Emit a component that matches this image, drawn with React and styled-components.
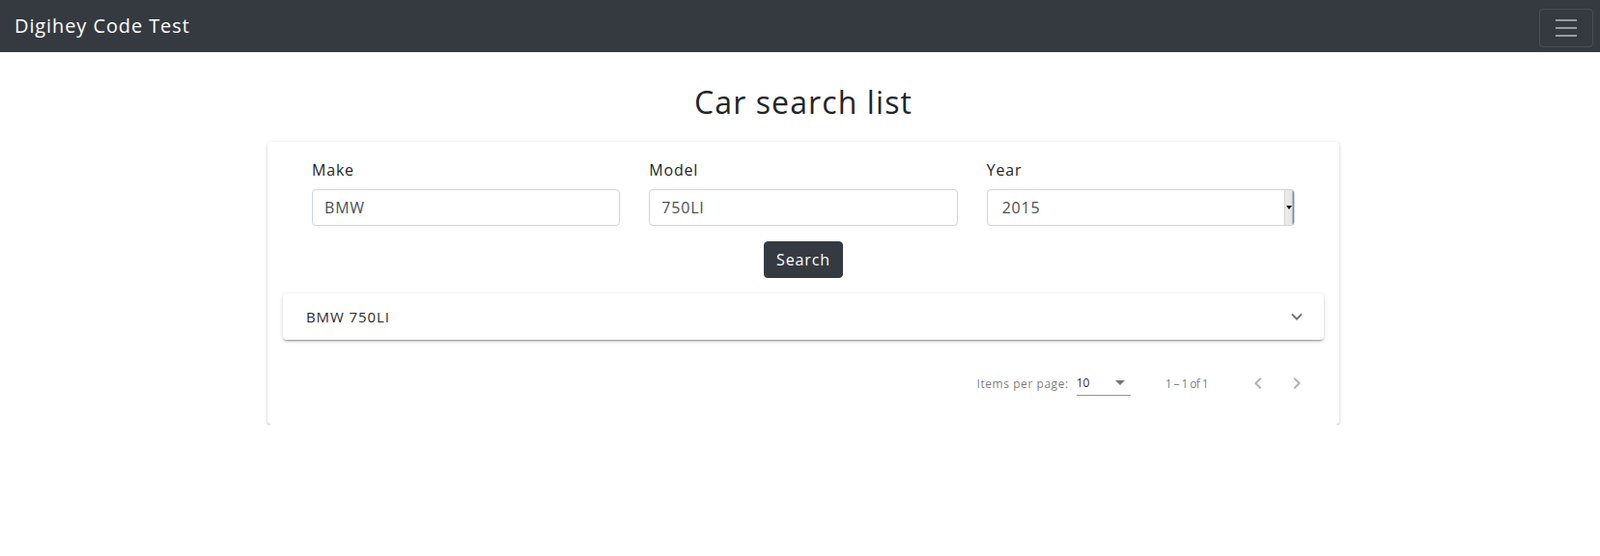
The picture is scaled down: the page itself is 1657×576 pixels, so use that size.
import styled, { createGlobalStyle } from "styled-components";

const GlobalStyle = createGlobalStyle`
  body {
    margin: 0;
    background: #fff;
    font-family: "Open Sans", "Liberation Sans", sans-serif;
    color: #212529;
  }
  * {
    box-sizing: border-box;
  }
`;

const Navbar = styled.nav`
  height: 54px;
  background: #343a40;
  display: flex;
  align-items: center;
  justify-content: space-between;
  padding: 0 7px 0 15px;
`;

const Brand = styled.div`
  color: #fff;
  font-size: 20px;
  line-height: 30px;
  letter-spacing: 0.9px;
`;

const Toggler = styled.button`
  width: 56px;
  height: 40px;
  margin-top: 4px;
  background: transparent;
  border: 1px solid rgba(255, 255, 255, 0.1);
  border-radius: 4px;
  display: flex;
  align-items: center;
  justify-content: center;
  padding: 0;
`;

const Main = styled.main`
  padding-left: 7px;
`;

const Title = styled.h2`
  margin: 33px 0 22px;
  text-align: center;
  font-size: 32px;
  line-height: 38px;
  font-weight: 400;
  letter-spacing: 1.1px;
`;

const Card = styled.section`
  width: 1110px;
  margin: 0 auto;
  background: #fff;
  border-radius: 4px;
  box-shadow: 0 2px 1px -1px rgba(0, 0, 0, 0.28), 0 1px 2px 0 rgba(0, 0, 0, 0.18),
    0 1px 4px 0 rgba(0, 0, 0, 0.1);
  padding: 16px 16px 15px;
`;

const Form = styled.form`
  display: flex;
  flex-direction: column;
  align-items: center;
  gap: 16px;
  padding: 0 30px;
`;

const FieldRow = styled.div`
  width: 100%;
  display: grid;
  grid-template-columns: repeat(3, 1fr);
  gap: 30px;
`;

const Field = styled.div`
  display: flex;
  flex-direction: column;
`;

const Label = styled.label`
  font-size: 16px;
  line-height: 24px;
  margin: 1px 0 8px;
  letter-spacing: 0.8px;
`;

const Input = styled.input`
  height: 38px;
  border: 1px solid #ced4da;
  border-radius: 4px;
  padding: 0 12px;
  font-family: inherit;
  font-size: 16px;
  letter-spacing: 0.8px;
  color: #495057;
  background: #fff;
  outline: none;
`;

const SelectBox = styled.div`
  position: relative;
  height: 38px;
`;

const Select = styled.select`
  width: 100%;
  height: 38px;
  appearance: none;
  border: 1px solid #ced4da;
  border-radius: 4px;
  padding: 0 16px 0 15px;
  font-family: inherit;
  font-size: 16px;
  letter-spacing: 0.8px;
  color: #495057;
  background: #fff;
  outline: none;
`;

const SpinStrip = styled.div`
  position: absolute;
  top: 1px;
  right: 1px;
  bottom: 1px;
  width: 10px;
  background: linear-gradient(to right, #bdbdbd 0, #ececec 1px, #e4e4e4 8px, #8a8a8a 9px);
  border-radius: 0 3px 3px 0;
  display: flex;
  align-items: center;
  justify-content: center;
  pointer-events: none;

  &::after {
    content: "";
    border-left: 3px solid transparent;
    border-right: 3px solid transparent;
    border-top: 4px solid #111;
    margin-left: -1px;
  }
`;

const SearchButton = styled.button`
  height: 38px;
  padding: 0 12px;
  background: #343a40;
  color: #fff;
  border: 1px solid #343a40;
  border-radius: 4px;
  font-family: inherit;
  font-size: 16px;
  letter-spacing: 0.9px;
`;

const Panel = styled.div`
  margin-top: 16px;
  height: 48px;
  border-radius: 4px;
  background: #fff;
  box-shadow: 0 3px 1px -2px rgba(0, 0, 0, 0.2), 0 2px 2px 0 rgba(0, 0, 0, 0.14),
    0 1px 5px 0 rgba(0, 0, 0, 0.12);
  display: flex;
  align-items: center;
  justify-content: space-between;
  padding: 0 21px 0 24px;
  font-size: 15px;
  letter-spacing: 0.9px;
  color: rgba(0, 0, 0, 0.87);
`;

const Paginator = styled.div`
  margin-top: 17px;
  height: 56px;
  display: flex;
  align-items: center;
  justify-content: flex-end;
  padding: 0 8px;
  font-size: 12px;
  color: rgba(0, 0, 0, 0.54);
`;

const PageLabel = styled.span`
  letter-spacing: 0.55px;
`;

const PageSize = styled.div`
  width: 56px;
  margin: 0 0 0 8px;
  height: 24px;
  display: flex;
  align-items: center;
  justify-content: space-between;
  border-bottom: 1px solid rgba(0, 0, 0, 0.42);
  color: rgba(0, 0, 0, 0.87);
  padding: 0 6px 2px 0;
  position: relative;
  top: 1px;

  &::after {
    content: "";
    border-left: 5px solid transparent;
    border-right: 5px solid transparent;
    border-top: 5px solid rgba(0, 0, 0, 0.54);
  }
`;

const Range = styled.div`
  margin: 0 32px 0 36px;
  letter-spacing: -0.6px;
`;

const IconButton = styled.button`
  width: 40px;
  height: 40px;
  border: none;
  background: transparent;
  padding: 0;
  display: flex;
  align-items: center;
  justify-content: center;
  color: rgba(0, 0, 0, 0.3);
`;

const Chevron = ({ dir }) => (
  <svg width="24" height="24" viewBox="0 0 24 24" fill="currentColor">
    {dir === "left" ? (
      <path d="M15.41 7.41L14 6l-6 6 6 6 1.41-1.41L10.83 12z" />
    ) : (
      <path d="M10 6L8.59 7.41 13.17 12l-4.58 4.59L10 18l6-6z" />
    )}
  </svg>
);

const App = () => {
  return (
    <>
      <GlobalStyle />
      <Navbar>
        <Brand>Digihey Code Test</Brand>
        <Toggler aria-label="Toggle navigation">
          <svg width="30" height="30" viewBox="0 0 30 30">
            <path
              d="M4 7h22M4 15h22M4 23h22"
              stroke="rgba(255,255,255,0.5)"
              strokeWidth="2"
              strokeLinecap="butt"
            />
          </svg>
        </Toggler>
      </Navbar>
      <Main>
        <Title>Car search list</Title>
        <Card>
          <Form onSubmit={(e) => e.preventDefault()}>
            <FieldRow>
              <Field>
                <Label>Make</Label>
                <Input defaultValue="BMW" />
              </Field>
              <Field>
                <Label>Model</Label>
                <Input defaultValue="750LI" />
              </Field>
              <Field>
                <Label>Year</Label>
                <SelectBox>
                  <Select defaultValue="2015">
                    <option>2015</option>
                  </Select>
                  <SpinStrip />
                </SelectBox>
              </Field>
            </FieldRow>
            <SearchButton type="submit">Search</SearchButton>
          </Form>
          <Panel>
            <span>BMW 750LI</span>
            <svg width="14" height="10" viewBox="0 0 14 10">
              <path
                d="M2 2.5l5 5 5-5"
                fill="none"
                stroke="rgba(0,0,0,0.54)"
                strokeWidth="2"
              />
            </svg>
          </Panel>
          <Paginator>
            <PageLabel>Items per page:</PageLabel>
            <PageSize>10</PageSize>
            <Range>1 – 1 of 1</Range>
            <IconButton aria-label="Previous page">
              <Chevron dir="left" />
            </IconButton>
            <IconButton aria-label="Next page">
              <Chevron dir="right" />
            </IconButton>
          </Paginator>
        </Card>
      </Main>
    </>
  );
};

export default App;
